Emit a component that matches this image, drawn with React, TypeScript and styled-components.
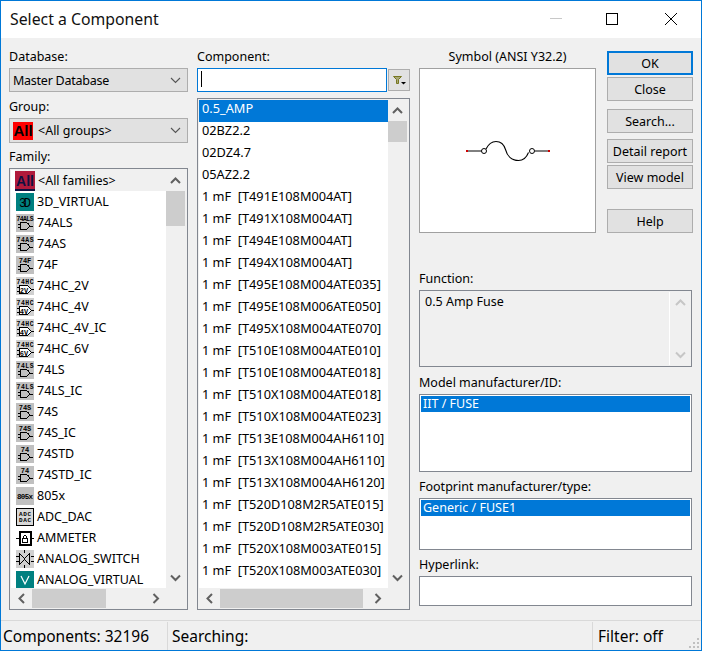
import React from "react";
import styled, { createGlobalStyle } from "styled-components";

const GlobalStyle = createGlobalStyle`
  html, body { margin: 0; padding: 0; background: #f0f0f0; }
  * { box-sizing: border-box; }
`;

type IconKind = "all" | "virtual" | "gate" | "hc" | "chip" | "box" | "meter" | "switch" | "analog";

const families: { name: string; kind: IconKind; label?: string; inner?: string }[] = [
  { name: "<All families>", kind: "all" },
  { name: "3D_VIRTUAL", kind: "virtual" },
  { name: "74ALS", kind: "gate", label: "74ALS" },
  { name: "74AS", kind: "gate", label: "74AS" },
  { name: "74F", kind: "gate", label: "74F" },
  { name: "74HC_2V", kind: "hc", label: "74HC", inner: "2V" },
  { name: "74HC_4V", kind: "hc", label: "74HC", inner: "4V" },
  { name: "74HC_4V_IC", kind: "hc", label: "74HC", inner: "4V" },
  { name: "74HC_6V", kind: "hc", label: "74HC", inner: "6V" },
  { name: "74LS", kind: "gate", label: "74LS" },
  { name: "74LS_IC", kind: "gate", label: "74LS" },
  { name: "74S", kind: "gate", label: "74S" },
  { name: "74S_IC", kind: "gate", label: "74S" },
  { name: "74STD", kind: "gate", label: "74" },
  { name: "74STD_IC", kind: "gate", label: "74" },
  { name: "805x", kind: "chip", label: "805x" },
  { name: "ADC_DAC", kind: "box" },
  { name: "AMMETER", kind: "meter" },
  { name: "ANALOG_SWITCH", kind: "switch" },
  { name: "ANALOG_VIRTUAL", kind: "analog" },
];

const components = [
  "0.5_AMP",
  "02BZ2.2",
  "02DZ4.7",
  "05AZ2.2",
  "1 mF  [T491E108M004AT]",
  "1 mF  [T491X108M004AT]",
  "1 mF  [T494E108M004AT]",
  "1 mF  [T494X108M004AT]",
  "1 mF  [T495E108M004ATE035]",
  "1 mF  [T495E108M006ATE050]",
  "1 mF  [T495X108M004ATE070]",
  "1 mF  [T510E108M004ATE010]",
  "1 mF  [T510E108M004ATE018]",
  "1 mF  [T510X108M004ATE018]",
  "1 mF  [T510X108M004ATE023]",
  "1 mF  [T513E108M004AH6110]",
  "1 mF  [T513X108M004AH6110]",
  "1 mF  [T513X108M004AH6120]",
  "1 mF  [T520D108M2R5ATE015]",
  "1 mF  [T520D108M2R5ATE030]",
  "1 mF  [T520X108M003ATE015]",
  "1 mF  [T520X108M003ATE030]",
];

const IconFrame = styled.svg<{ $size?: number }>`
  flex: none;
  width: ${(p) => p.$size ?? 18}px;
  height: ${(p) => p.$size ?? 18}px;
  display: block;
  shape-rendering: crispEdges;
`;

const tinyText = { fontFamily: "'Liberation Mono', monospace", fontWeight: 700 } as const;

const FamilyIcon = ({ kind, label, inner }: { kind: IconKind; label?: string; inner?: string }) => {
  if (kind === "all") {
    return (
      <IconFrame $size={20} viewBox="0 0 20 20">
        <rect width="20" height="20" fill="#b01a3c" />
        <rect y="18" width="20" height="2" fill="#101040" />
        <text x="10" y="15" textAnchor="middle" fontSize="14" fill="#101040" fontFamily="'Liberation Sans', sans-serif" fontWeight="700">
          All
        </text>
      </IconFrame>
    );
  }
  if (kind === "virtual") {
    return (
      <IconFrame viewBox="0 0 18 18">
        <rect width="18" height="18" fill="#008080" />
        <text x="9" y="13.500" textAnchor="middle" fontSize="12" textLength="12" fill="#000" fontFamily="'Liberation Mono', monospace">
          3D
        </text>
      </IconFrame>
    );
  }
  if (kind === "gate" || kind === "hc") {
    return (
      <IconFrame viewBox="0 0 18 18">
        <rect width="18" height="18" fill={kind === "hc" ? "#d0d0d0" : "#c0c0c0"} />
        <text x="9" y="7" textAnchor="middle" fontSize={(label || "").length > 3 ? 6.4 : 7} textLength={(label || "").length > 3 ? 17 : undefined} fill="#000" style={tinyText}>
          {label}
        </text>
        {kind === "gate" ? (
          <path d="M4.500 8.500h4c3 0 4.500 2 5 3.500-.5 1.500-2 3.500-5 3.500h-4zM1.500 10.500h3M1.500 13.500h3M13.500 12h3" fill="none" stroke="#000" />
        ) : (
          <>
            <path d="M3.500 8.500h8l4 4-4 4h-8zM.5 10.500h3M.5 14.500h3M15.500 12.500h2.500" fill="#fff" stroke="#000" />
            <text x="8" y="15.500" textAnchor="middle" fontSize="7" fill="#000" style={tinyText}>
              {inner}
            </text>
          </>
        )}
      </IconFrame>
    );
  }
  if (kind === "chip") {
    return (
      <IconFrame viewBox="0 0 18 18">
        <rect width="18" height="18" fill="#c0c0c0" />
        <text x="9" y="12" textAnchor="middle" fontSize="7.500" textLength="16" fill="#000" style={tinyText}>
          {label}
        </text>
      </IconFrame>
    );
  }
  if (kind === "box") {
    return (
      <IconFrame viewBox="0 0 18 18">
        <rect width="18" height="18" fill="#d8d8d8" />
        <rect x=".5" y=".5" width="17" height="17" fill="none" stroke="#000" />
        <text x="9" y="8" textAnchor="middle" fontSize="6" textLength="12" fill="#000" style={tinyText}>
          ADC
        </text>
        <text x="9" y="14" textAnchor="middle" fontSize="6" textLength="12" fill="#000" style={tinyText}>
          DAC
        </text>
      </IconFrame>
    );
  }
  if (kind === "meter") {
    return (
      <IconFrame viewBox="0 0 18 18">
        <rect x="3.500" y="2.500" width="11" height="13" fill="#fff" stroke="#000" strokeWidth="2" />
        <path d="M0 9h3M15 9h3" stroke="#000" />
        <path d="M6.500 13.500v-4h5v4zM7.500 9.500v-2l1-1h1l1 1v2" fill="none" stroke="#000" />
      </IconFrame>
    );
  }
  if (kind === "switch") {
    return (
      <IconFrame viewBox="0 0 18 18">
        <rect width="18" height="18" fill="#d0d0d0" />
        <path d="M3.500 3.500l5 5 5-5v11l-5-5-5 5zM0 6.500h3M15 6.500h3M0 11.500h3M15 11.500h3M8.500 0v3M8.500 15v3" fill="none" stroke="#000" />
      </IconFrame>
    );
  }
  return (
    <IconFrame viewBox="0 0 18 18">
      <rect width="18" height="18" fill="#008080" />
      <path d="M5 5l4 8 4-8" fill="none" stroke="#fff" strokeWidth="1.200" shapeRendering="geometricPrecision" />
    </IconFrame>
  );
};

const Window = styled.div`
  width: 702px;
  height: 651px;
  display: flex;
  flex-direction: column;
  border: 1px solid #0078d7;
  background: #f0f0f0;
  color: #000;
  font-family: "Noto Sans", "Liberation Sans", sans-serif;
  font-size: 12.5px;
  overflow: hidden;
`;

const TitleBar = styled.div`
  flex: none;
  height: 37px;
  display: flex;
  align-items: center;
  background: #fff;
  padding: 0 7px 0 9px;
`;

const Title = styled.div`
  flex: 1;
  font-size: 15.8px;
  color: #111;
  padding-bottom: 2px;
`;

const WindowControls = styled.div`
  display: flex;
  align-items: center;
`;

const ControlIcon = styled.svg<{ $gap?: number }>`
  display: block;
  width: 46px;
  height: 37px;
  margin-left: ${(p) => p.$gap ?? 0}px;
`;

const Main = styled.div`
  flex: 1;
  display: flex;
  gap: 9px;
  padding: 0 8px;
  min-height: 0;
`;

const Column = styled.div<{ $width: number }>`
  flex: none;
  width: ${(p) => p.$width}px;
  display: flex;
  flex-direction: column;
`;

const Label = styled.div<{ $top: number; $center?: boolean }>`
  height: 17px;
  line-height: 17px;
  margin-top: ${(p) => p.$top}px;
  margin-bottom: 3px;
  white-space: nowrap;
  text-align: ${(p) => (p.$center ? "center" : "left")};
`;

const Select = styled.div<{ $height: number }>`
  height: ${(p) => p.$height}px;
  display: flex;
  align-items: center;
  gap: 5px;
  padding: 0 6px 0 3px;
  background: #e1e1e1;
  border: 1px solid #adadad;
`;

const SelectText = styled.span<{ $tight?: boolean }>`
  flex: 1;
  white-space: nowrap;
  letter-spacing: ${(p) => (p.$tight ? "-0.25px" : "0")};
`;

const Chevron = () => (
  <svg width="11" height="7" viewBox="0 0 11 7" style={{ flex: "none", display: "block" }}>
    <path d="M1 1l4.500 4.500L10 1" fill="none" stroke="#555" strokeWidth="1.100" />
  </svg>
);

const GroupIcon = styled.span`
  flex: none;
  width: 20px;
  height: 18px;
  background: #ff0000;
  color: #000;
  font: 700 15px/18px "Liberation Sans", sans-serif;
  text-align: center;
`;

const ListBox = styled.div<{ $height: number; $top?: number }>`
  display: flex;
  flex-direction: column;
  height: ${(p) => p.$height}px;
  margin-top: ${(p) => p.$top ?? 0}px;
  border: 1px solid #828790;
  padding: 1px;
  background: #f0f0f0;
`;

const ListBody = styled.div`
  flex: 1;
  display: flex;
  min-height: 0;
`;

const Rows = styled.div`
  flex: 1;
  min-width: 0;
  background: #fff;
  overflow: hidden;
`;

const FamilyRow = styled.div<{ $current?: boolean }>`
  height: 21px;
  display: flex;
  align-items: center;
  gap: 3px;
  margin-left: 4px;
  padding-left: ${(p) => (p.$current ? 0 : 1)}px;
  white-space: nowrap;
  background: ${(p) => (p.$current ? "#f0f0f0" : "transparent")};
`;

const ComponentRow = styled.div<{ $selected?: boolean }>`
  height: 22px;
  line-height: 16px;
  padding-left: 3px;
  white-space: pre;
  font-size: 12.75px;
  background: ${(p) => (p.$selected ? "#0078d7" : "transparent")};
  color: ${(p) => (p.$selected ? "#fff" : "#000")};
`;

const VScroll = styled.div`
  flex: none;
  width: 19px;
  margin-right: 1px;
  display: flex;
  flex-direction: column;
`;

const ScrollArrow = styled.div<{ $disabled?: boolean }>`
  flex: none;
  height: 21px;
  display: flex;
  align-items: center;
  justify-content: center;
  color: ${(p) => (p.$disabled ? "#c6c6c6" : "#606060")};
`;

const VThumb = styled.div<{ $height: number }>`
  flex: none;
  height: ${(p) => p.$height}px;
  background: #cdcdcd;
`;

const Spacer = styled.div`
  flex: 1;
`;

const HScroll = styled.div`
  flex: none;
  height: 20px;
  margin-right: 20px;
  display: flex;
  align-items: center;
`;

const HArrow = styled.div`
  flex: none;
  width: 21px;
  height: 20px;
  display: flex;
  align-items: center;
  justify-content: center;
  color: #606060;
`;

const HThumb = styled.div<{ $width: number }>`
  flex: none;
  width: ${(p) => p.$width}px;
  height: 19px;
  background: #cdcdcd;
`;

const Arrow = ({ dir }: { dir: "up" | "down" | "left" | "right" }) => {
  const d = {
    up: "M1 6l4.500-4.500L10 6",
    down: "M1 1.500L5.500 6 10 1.500",
    left: "M6 1L1.500 5.500 6 10",
    right: "M1.500 1L6 5.500 1.500 10",
  }[dir];
  const wide = dir === "up" || dir === "down";
  return (
    <svg width={wide ? 11 : 8} height={wide ? 8 : 11} viewBox={wide ? "0 0 11 8" : "0 0 8 11"} style={{ display: "block" }}>
      <path d={d} fill="none" stroke="currentColor" strokeWidth="2" />
    </svg>
  );
};

const SearchRow = styled.div`
  display: flex;
  align-items: center;
  height: 24px;
  gap: 1px;
`;

const SearchInput = styled.div`
  width: 190px;
  height: 24px;
  border: 1px solid #0078d7;
  background: #fff;
  padding: 2px 0 0 3px;
`;

const Caret = styled.div`
  width: 1px;
  height: 16px;
  background: #000;
`;

const FilterButton = styled.div`
  width: 22px;
  height: 22px;
  display: flex;
  align-items: center;
  justify-content: center;
  background: #e1e1e1;
  border: 1px solid #adadad;
`;

const TopRight = styled.div`
  display: flex;
  gap: 11px;
  height: 230px;
`;

const SymbolPane = styled.div`
  flex: none;
  width: 177px;
  display: flex;
  flex-direction: column;
`;

const SymbolBox = styled.div`
  height: 165px;
  background: #fff;
  border: 1px solid #a0a0a0;
  display: flex;
  align-items: center;
  justify-content: center;
`;

const ButtonStack = styled.div`
  flex: none;
  width: 86px;
  padding-top: 13px;
  display: flex;
  flex-direction: column;
`;

const DialogButton = styled.div<{ $top?: number; $default?: boolean }>`
  height: 24px;
  margin-top: ${(p) => p.$top ?? 0}px;
  display: flex;
  align-items: center;
  justify-content: center;
  background: #e1e1e1;
  border: ${(p) => (p.$default ? "2px solid #0078d7" : "1px solid #adadad")};
  white-space: nowrap;
`;

const FieldBox = styled.div<{ $height: number; $muted?: boolean }>`
  height: ${(p) => p.$height}px;
  border: 1px solid #828790;
  padding: 1px;
  background: ${(p) => (p.$muted ? "#f0f0f0" : "#fff")};
  display: flex;
`;

const FunctionText = styled.div`
  flex: 1;
  padding: 1px 4px;
  line-height: 17px;
`;

const DisabledScroll = styled.div`
  flex: none;
  width: 21px;
  border-left: 1px solid #fff;
  display: flex;
  flex-direction: column;
  justify-content: space-between;
`;

const SelectedLine = styled.div`
  flex: 1;
  height: 16px;
  line-height: 16px;
  padding-left: 2px;
  background: #0078d7;
  color: #fff;
`;

const StatusBar = styled.div`
  flex: none;
  height: 30px;
  position: relative;
  display: flex;
  align-items: stretch;
  border-top: 1px solid #d9d9d9;
  font-size: 15.5px;
`;

const StatusCell = styled.div<{ $width?: number; $pad?: number; $last?: boolean }>`
  ${(p) => (p.$width ? `width: ${p.$width}px; flex: none;` : "flex: 1;")}
  display: flex;
  align-items: center;
  padding-left: ${(p) => p.$pad ?? 2}px;
  margin-top: 1px;
  border-right: ${(p) => (p.$last ? "none" : "1px solid #d9d9d9")};
  white-space: nowrap;
`;

const Grip = styled.svg`
  position: absolute;
  right: 1px;
  bottom: 1px;
  width: 12px;
  height: 12px;
`;

export default function App() {
  return (
    <Window>
      <GlobalStyle />
      <TitleBar>
        <Title>Select a Component</Title>
        <WindowControls>
          <ControlIcon viewBox="0 0 46 37">
            <path d="M17 17.500h12" stroke="#c8c8c8" />
          </ControlIcon>
          <ControlIcon viewBox="0 0 46 37" $gap={10}>
            <rect x="17.500" y="12.500" width="11" height="11" fill="none" stroke="#000" />
          </ControlIcon>
          <ControlIcon viewBox="0 0 46 37" $gap={13}>
            <path d="M17 12l12 12M29 12L17 24" fill="none" stroke="#000" />
          </ControlIcon>
        </WindowControls>
      </TitleBar>
      <Main>
        <Column $width={179}>
          <Label $top={10}>Database:</Label>
          <Select $height={24}>
            <SelectText $tight>Master Database</SelectText>
            <Chevron />
          </Select>
          <Label $top={6}>Group:</Label>
          <Select $height={25}>
            <GroupIcon>All</GroupIcon>
            <SelectText>&lt;All groups&gt;</SelectText>
            <Chevron />
          </Select>
          <Label $top={5}>Family:</Label>
          <ListBox $height={442}>
            <ListBody>
              <Rows>
                {families.map((f, i) => (
                  <FamilyRow key={f.name} $current={i === 0}>
                    <FamilyIcon kind={f.kind} label={f.label} inner={f.inner} />
                    {f.name}
                  </FamilyRow>
                ))}
              </Rows>
              <VScroll>
                <ScrollArrow>
                  <Arrow dir="up" />
                </ScrollArrow>
                <VThumb $height={35} />
                <Spacer />
                <ScrollArrow>
                  <Arrow dir="down" />
                </ScrollArrow>
              </VScroll>
            </ListBody>
            <HScroll>
              <HArrow>
                <Arrow dir="left" />
              </HArrow>
              <HThumb $width={74} />
              <Spacer />
              <HArrow>
                <Arrow dir="right" />
              </HArrow>
            </HScroll>
          </ListBox>
        </Column>
        <Column $width={213}>
          <Label $top={10}>Component:</Label>
          <SearchRow>
            <SearchInput>
              <Caret />
            </SearchInput>
            <FilterButton>
              <svg width="14" height="10" viewBox="0 0 14 10">
                <path d="M1.500 1.500h8L6.500 4.500v4h-2v-4z" fill="#a8a878" stroke="#77771f" />
                <path d="M9 7h5l-2.500 2.500z" fill="#000" />
              </svg>
            </FilterButton>
          </SearchRow>
          <ListBox $height={512} $top={6}>
            <ListBody>
              <Rows>
                {components.map((c, i) => (
                  <ComponentRow key={c} $selected={i === 0}>
                    {c}
                  </ComponentRow>
                ))}
              </Rows>
              <VScroll>
                <ScrollArrow>
                  <Arrow dir="up" />
                </ScrollArrow>
                <VThumb $height={21} />
                <Spacer />
                <ScrollArrow>
                  <Arrow dir="down" />
                </ScrollArrow>
              </VScroll>
            </ListBody>
            <HScroll>
              <HArrow>
                <Arrow dir="left" />
              </HArrow>
              <HThumb $width={143} />
              <Spacer />
              <HArrow>
                <Arrow dir="right" />
              </HArrow>
            </HScroll>
          </ListBox>
        </Column>
        <Column $width={273}>
          <TopRight>
            <SymbolPane>
              <Label $top={10} $center>
                Symbol (ANSI Y32.2)
              </Label>
              <SymbolBox>
                <svg width="90" height="26" viewBox="462 138 90 26">
                  <path d="M466 151h15M534 151h14" stroke="#000" fill="none" />
                  <circle cx="483" cy="151" r="2.500" fill="#fff" stroke="#000" />
                  <circle cx="531" cy="151" r="2.500" fill="#fff" stroke="#000" />
                  <path d="M485 149c2-4 6-7.500 10-7.500 5 0 8 3 9.500 8 1.500 6 6 11 13 11 4 0 8-3 10-8" fill="none" stroke="#000" strokeWidth="1.100" />
                  <path d="M465 150l2 2M467 150l-2 2M547 150l2 2M549 150l-2 2" stroke="#d00000" />
                </svg>
              </SymbolBox>
            </SymbolPane>
            <ButtonStack>
              <DialogButton $default>OK</DialogButton>
              <DialogButton $top={2}>Close</DialogButton>
              <DialogButton $top={8}>Search...</DialogButton>
              <DialogButton $top={6}>Detail report</DialogButton>
              <DialogButton $top={2}>View model</DialogButton>
              <DialogButton $top={20}>Help</DialogButton>
            </ButtonStack>
          </TopRight>
          <Label $top={2}>Function:</Label>
          <FieldBox $height={77} $muted>
            <FunctionText>0.5 Amp Fuse</FunctionText>
            <DisabledScroll>
              <ScrollArrow $disabled>
                <Arrow dir="up" />
              </ScrollArrow>
              <ScrollArrow $disabled>
                <Arrow dir="down" />
              </ScrollArrow>
            </DisabledScroll>
          </FieldBox>
          <Label $top={7}>Model manufacturer/ID:</Label>
          <FieldBox $height={78}>
            <SelectedLine>IIT / FUSE</SelectedLine>
          </FieldBox>
          <Label $top={6}>Footprint manufacturer/type:</Label>
          <FieldBox $height={52}>
            <SelectedLine>Generic / FUSE1</SelectedLine>
          </FieldBox>
          <Label $top={6}>Hyperlink:</Label>
          <FieldBox $height={30} />
        </Column>
      </Main>
      <StatusBar>
        <StatusCell $width={167}>Components: 32196</StatusCell>
        <StatusCell $width={425} $pad={4}>
          Searching:
        </StatusCell>
        <StatusCell $pad={5} $last>
          Filter: off
        </StatusCell>
        <Grip viewBox="0 0 12 12">
          <path d="M9 1h2v2H9zM5 5h2v2H5zM9 5h2v2H9zM1 9h2v2H1zM5 9h2v2H5zM9 9h2v2H9z" fill="#c0c0c0" />
        </Grip>
      </StatusBar>
    </Window>
  );
}
